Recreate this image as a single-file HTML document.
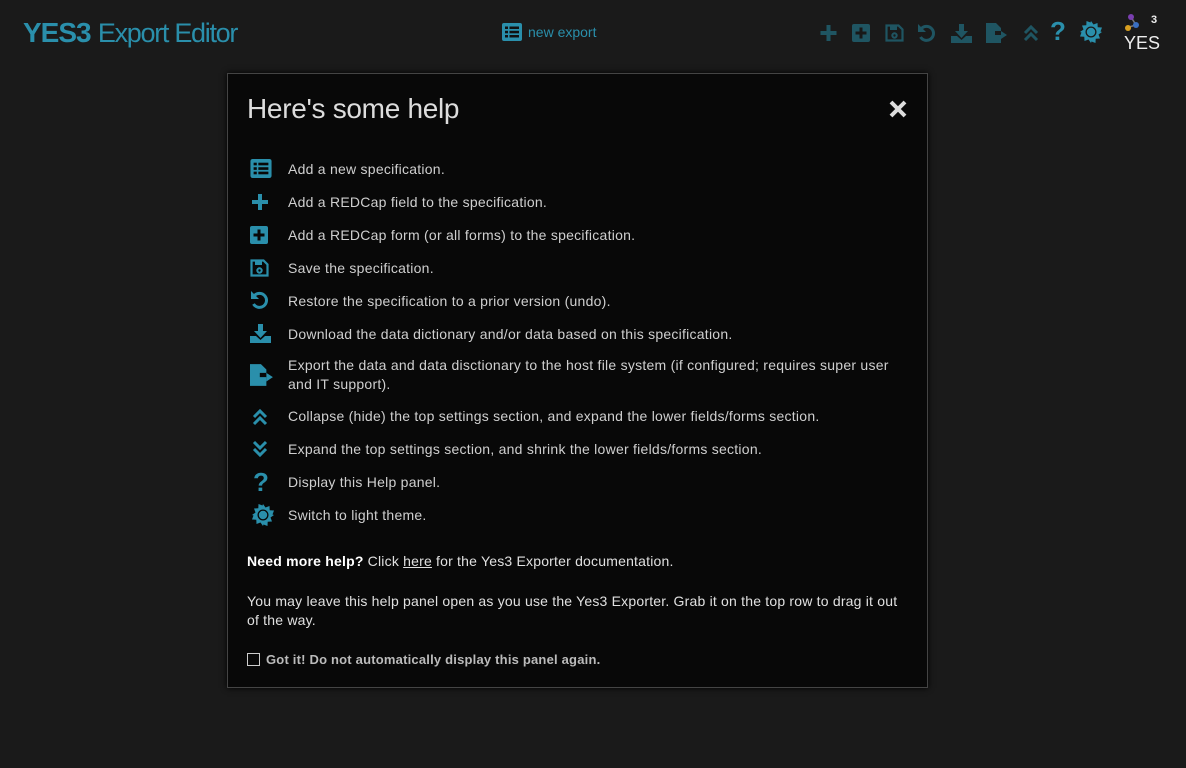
<!DOCTYPE html>
<html><head><meta charset="utf-8"><style>
*{box-sizing:border-box;margin:0;padding:0}
body{width:1186px;height:768px;background:#1a1a1a;font-family:"Liberation Sans",sans-serif;overflow:hidden;position:relative;color:#ccc}
.abs{position:absolute}
.logo{left:23px;top:17px;font-size:28px;color:#2a8fab;letter-spacing:-0.5px}
.logo b{font-weight:bold;letter-spacing:-1px}
.logo span{font-weight:normal;font-size:27px;letter-spacing:-1.3px}
.ne{left:502px;top:23px;color:#2a8fab;font-size:14px;display:flex;align-items:center;gap:6px}
.hi{position:absolute;top:23px}
.panel{left:227px;top:73px;width:701px;height:615px;background:#080808;border:1px solid #444;box-shadow:0 0 6px #000}
.title{left:19px;top:19px;font-size:28px;color:#ddd;font-weight:300;letter-spacing:-0.3px}
.close{left:660px;top:25px}
.row{position:absolute;left:60px;font-size:14px;color:#cfcfcf;line-height:19px;width:625px;letter-spacing:0.25px}
.ic{position:absolute;left:22px}
.p{position:absolute;left:19px;font-size:14px;color:#e0e0e0;line-height:19px;width:665px;letter-spacing:0.2px}
</style></head><body>
<div class="abs logo"><b>YES3</b> <span>Export Editor</span></div>
<div class="abs ne"><svg width="20" height="18" viewBox="0 0 20 18"><rect width="20" height="18" rx="2" fill="#2a8fab"/><g fill="#111"><rect x="3" y="3.5" width="3" height="2.5"/><rect x="7.5" y="3.5" width="9.5" height="2.5"/><rect x="3" y="7.8" width="3" height="2.5"/><rect x="7.5" y="7.8" width="9.5" height="2.5"/><rect x="3" y="12" width="3" height="2.5"/><rect x="7.5" y="12" width="9.5" height="2.5"/></g></svg>new export</div>

<svg class="hi" style="left:819px" width="19" height="20" viewBox="0 0 19 20"><path d="M7.5 2h4v6h6v4h-6v6h-4v-6h-6v-4h6z" fill="#1f5562"/></svg>
<svg class="hi" style="left:852px" width="19" height="20" viewBox="0 0 19 20"><rect x="0" y="1" width="18" height="18" rx="2" fill="#1f5562"/><path d="M7.5 4.5h3v4h4v3h-4v4h-3v-4h-4v-3h4z" fill="#181818"/></svg>
<svg class="hi" style="left:885px" width="19" height="20" viewBox="0 0 19 20"><path d="M1.5 2.5h12l4 4v11h-16z" fill="none" stroke="#1f5562" stroke-width="2.2"/><rect x="5" y="3" width="7" height="4" fill="#1f5562"/><circle cx="9.5" cy="12.5" r="2.2" fill="none" stroke="#1f5562" stroke-width="2"/></svg>
<svg class="hi" style="left:917px" width="20" height="20" viewBox="0 0 20 20"><path d="M4.5 5.5A7 7 0 1 1 3.5 14" fill="none" stroke="#1f5562" stroke-width="3"/><path d="M1 1v8h8z" fill="#1f5562"/></svg>
<svg class="hi" style="left:951px" width="21" height="20" viewBox="0 0 21 20"><path d="M8 1h5v7h4l-6.5 7L4 8h4z" fill="#1f5562"/><path d="M0 13h6l4.5 4 4.5-4h6v7H0z" fill="#1f5562"/></svg>
<svg class="hi" style="left:986px" width="22" height="20" viewBox="0 0 22 20"><path d="M0 0h10l5 5v3h-6v4h6v8H0z" fill="#1f5562"/><path d="M15 8l6 4-6 4z" fill="#1f5562"/></svg>
<svg class="hi" style="left:1023px" width="16" height="20" viewBox="0 0 16 20"><path d="M2 10l6-6 6 6M2 17l6-6 6 6" fill="none" stroke="#1f5562" stroke-width="3"/></svg>
<div class="abs" style="left:1050px;top:16px;font-size:26px;font-weight:bold;color:#2a8fab">?</div>
<svg class="hi" style="left:1080px;top:21px" width="22" height="22" viewBox="0 0 22 22"><path d="M11 0l2.5 3.5 4-1.5 0.2 4.3 4.3 0.2-1.5 4L22 11l-3.5 2.5 1.5 4-4.3.2-.2 4.3-4-1.5L11 22l-2.5-3.5-4 1.5-.2-4.3-4.3-.2 1.5-4L0 11l3.5-2.5-1.5-4 4.3-.2.2-4.3 4 1.5z" fill="#2a8fab"/><circle cx="11" cy="11" r="5.5" fill="#181818"/><circle cx="11" cy="11" r="4.2" fill="#2a8fab"/></svg>
<svg class="abs" style="left:1124px;top:13px" width="40" height="38" viewBox="0 0 40 38"><line x1="7" y1="4" x2="12" y2="12" stroke="#777" stroke-width="1.5"/><line x1="5" y1="14" x2="12" y2="12" stroke="#777" stroke-width="1.5"/><circle cx="7" cy="4" r="3" fill="#7a3fb0"/><circle cx="12" cy="12" r="3" fill="#3a6fc0"/><circle cx="4" cy="15" r="3" fill="#d9a020"/><text x="27" y="10" font-size="11" font-weight="bold" fill="#eee" font-family="Liberation Sans">3</text><text x="0" y="36" font-size="18" fill="#eee" font-family="Liberation Sans">YES</text></svg>

<div class="abs panel">
<div class="abs title">Here's some help</div>
<svg class="abs close" width="20" height="20" viewBox="0 0 20 20"><path d="M3 3l14 14M17 3L3 17" stroke="#ddd" stroke-width="4"/></svg>

<svg class="ic" style="top:85px" width="22" height="19" viewBox="0 0 20 18"><rect width="20" height="18" rx="2" fill="#2a8fab"/><g fill="#080808"><rect x="3" y="3.5" width="3" height="2.5"/><rect x="7.5" y="3.5" width="9.5" height="2.5"/><rect x="3" y="7.8" width="3" height="2.5"/><rect x="7.5" y="7.8" width="9.5" height="2.5"/><rect x="3" y="12" width="3" height="2.5"/><rect x="7.5" y="12" width="9.5" height="2.5"/></g></svg>
<div class="row" style="top:86px">Add a new specification.</div>
<svg class="ic" style="top:118px" width="20" height="20" viewBox="0 0 19 20"><path d="M7.5 2h4v6h6v4h-6v6h-4v-6h-6v-4h6z" fill="#2a8fab"/></svg>
<div class="row" style="top:119px">Add a REDCap field to the specification.</div>
<svg class="ic" style="top:151px" width="19" height="20" viewBox="0 0 19 20"><rect x="0" y="1" width="18" height="18" rx="2" fill="#2a8fab"/><path d="M7.5 4.5h3v4h4v3h-4v4h-3v-4h-4v-3h4z" fill="#080808"/></svg>
<div class="row" style="top:152px">Add a REDCap form (or all forms) to the specification.</div>
<svg class="ic" style="top:184px" width="19" height="20" viewBox="0 0 19 20"><path d="M1.5 2.5h12l4 4v11h-16z" fill="none" stroke="#2a8fab" stroke-width="2.2"/><rect x="5" y="3" width="7" height="4" fill="#2a8fab"/><circle cx="9.5" cy="12.5" r="2.2" fill="none" stroke="#2a8fab" stroke-width="2"/></svg>
<div class="row" style="top:185px">Save the specification.</div>
<svg class="ic" style="top:216px" width="20" height="20" viewBox="0 0 20 20"><path d="M4.5 5.5A7 7 0 1 1 3.5 14" fill="none" stroke="#2a8fab" stroke-width="3"/><path d="M1 1v8h8z" fill="#2a8fab"/></svg>
<div class="row" style="top:218px">Restore the specification to a prior version (undo).</div>
<svg class="ic" style="top:249px" width="21" height="20" viewBox="0 0 21 20"><path d="M8 1h5v7h4l-6.5 7L4 8h4z" fill="#2a8fab"/><path d="M0 13h6l4.5 4 4.5-4h6v7H0z" fill="#2a8fab"/></svg>
<div class="row" style="top:251px">Download the data dictionary and/or data based on this specification.</div>
<svg class="ic" style="top:290px" width="24" height="22" viewBox="0 0 22 20"><path d="M0 0h10l5 5v3h-6v4h6v8H0z" fill="#2a8fab"/><path d="M15 8l6 4-6 4z" fill="#2a8fab"/></svg>
<div class="row" style="top:282px;width:615px">Export the data and data disctionary to the host file system (if configured; requires super user and IT support).</div>
<svg class="ic" style="top:333px;left:24px" width="16" height="20" viewBox="0 0 16 20"><path d="M2 10l6-6 6 6M2 17l6-6 6 6" fill="none" stroke="#2a8fab" stroke-width="3"/></svg>
<div class="row" style="top:333px">Collapse (hide) the top settings section, and expand the lower fields/forms section.</div>
<svg class="ic" style="top:365px;left:24px" width="16" height="20" viewBox="0 0 16 20"><path d="M2 3l6 6 6-6M2 10l6 6 6-6" fill="none" stroke="#2a8fab" stroke-width="3"/></svg>
<div class="row" style="top:366px">Expand the top settings section, and shrink the lower fields/forms section.</div>
<div class="abs" style="left:25px;top:393px;font-size:26px;font-weight:bold;color:#2a8fab">?</div>
<div class="row" style="top:399px">Display this Help panel.</div>
<svg class="ic" style="top:430px;left:24px" width="22" height="22" viewBox="0 0 22 22"><path d="M11 0l2.5 3.5 4-1.5 0.2 4.3 4.3 0.2-1.5 4L22 11l-3.5 2.5 1.5 4-4.3.2-.2 4.3-4-1.5L11 22l-2.5-3.5-4 1.5-.2-4.3-4.3-.2 1.5-4L0 11l3.5-2.5-1.5-4 4.3-.2.2-4.3 4 1.5z" fill="#2a8fab"/><circle cx="11" cy="11" r="5.5" fill="#080808"/><circle cx="11" cy="11" r="4.2" fill="#2a8fab"/></svg>
<div class="row" style="top:432px">Switch to light theme.</div>

<div class="p" style="top:478px"><b style="color:#fff">Need more help?</b> Click <u>here</u> for the Yes3 Exporter documentation.</div>
<div class="p" style="top:518px;width:660px">You may leave this help panel open as you use the Yes3 Exporter. Grab it on the top row to drag it out of the way.</div>
<div class="p" style="top:576px;font-weight:bold;font-size:13px;color:#bbb;display:flex;align-items:center;gap:6px"><span style="display:inline-block;width:13px;height:13px;border:1.5px solid #ccc"></span>Got it! Do not automatically display this panel again.</div>
</div>
</body></html>
